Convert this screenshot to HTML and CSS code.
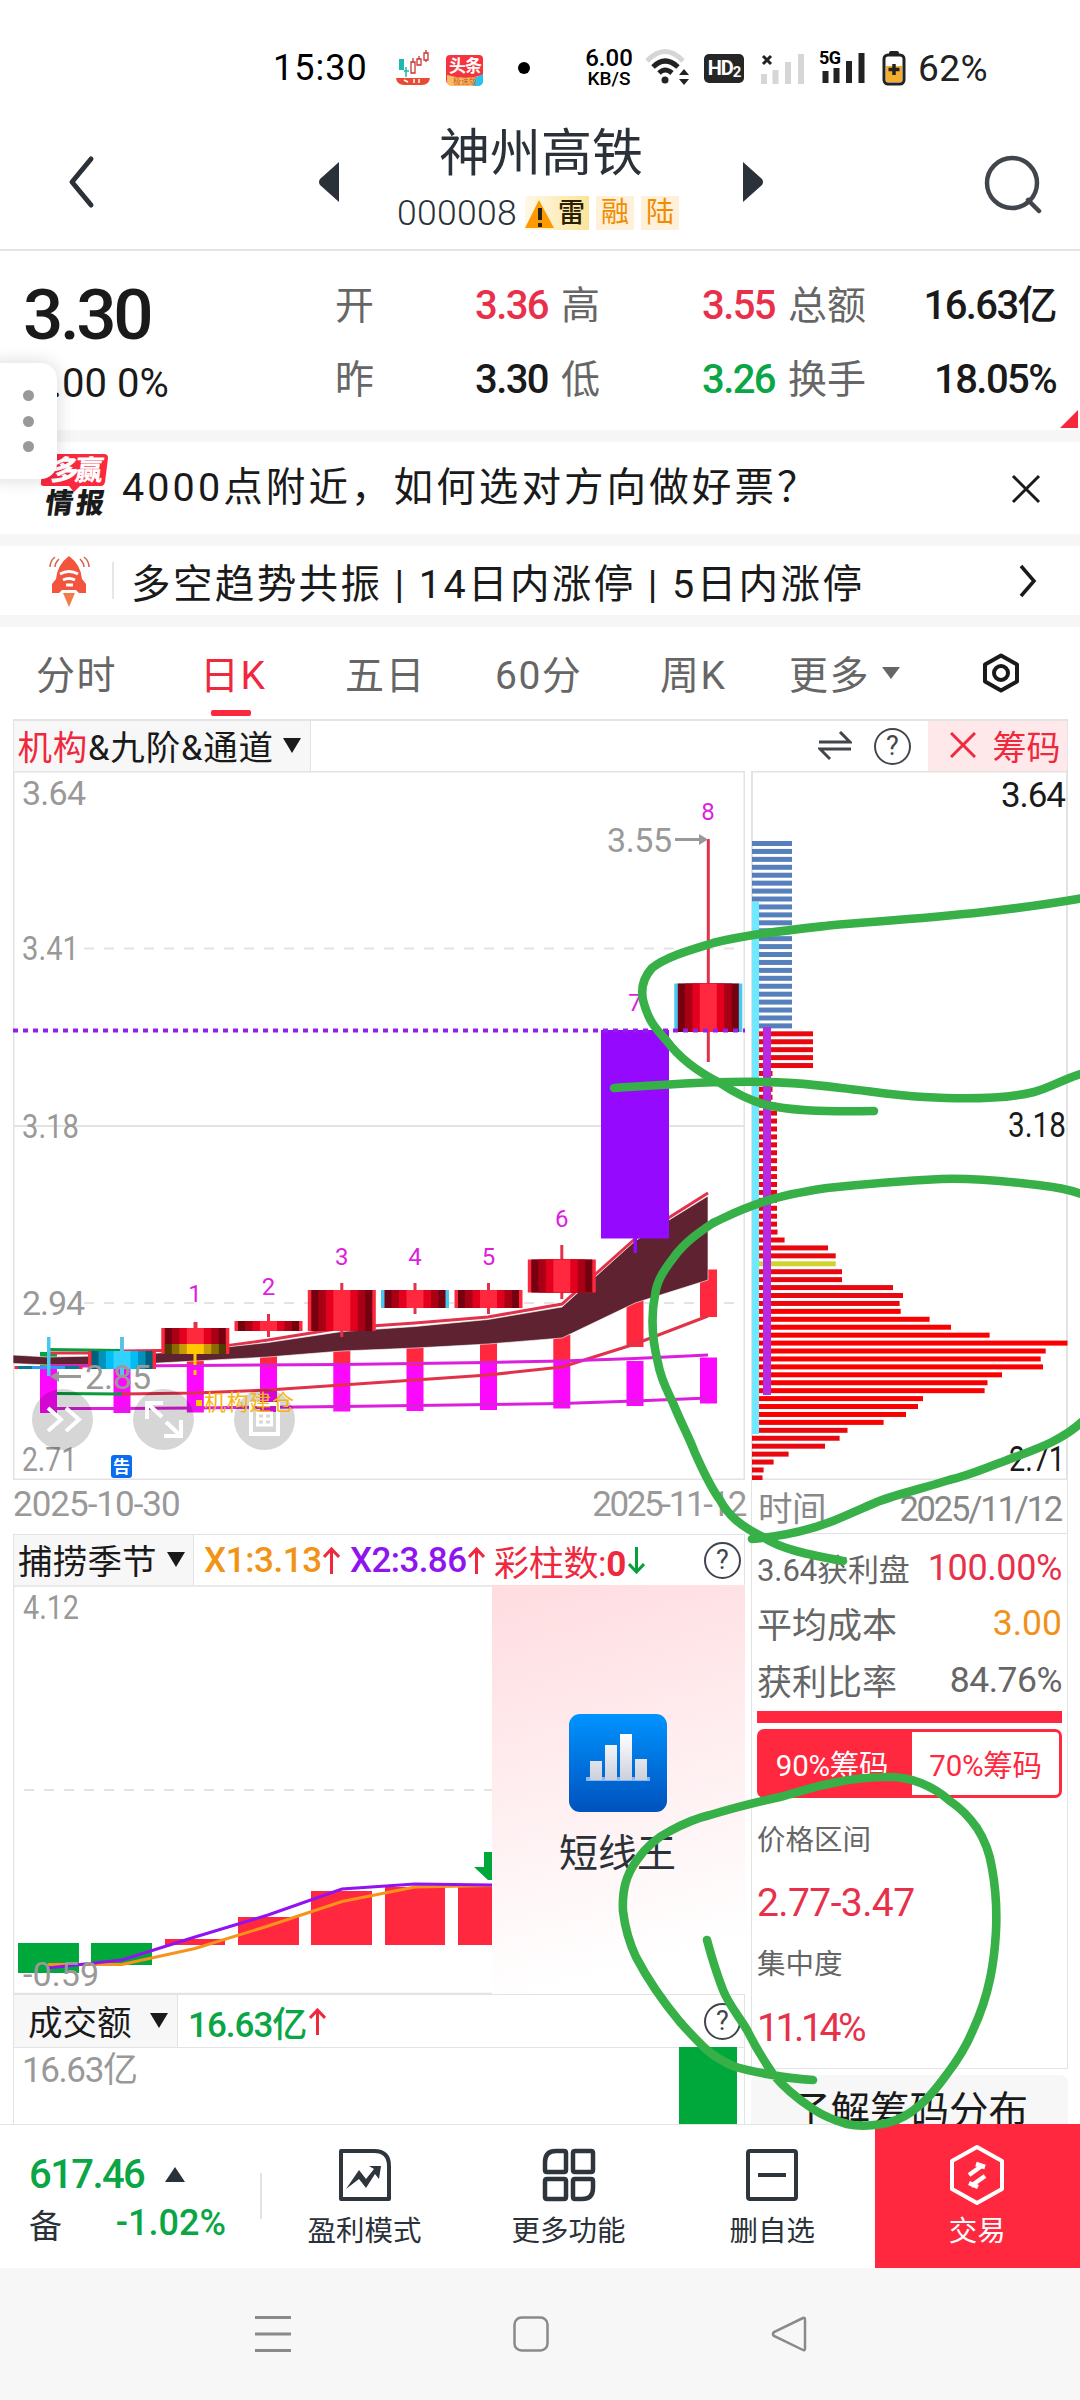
FILE: index.html
```html
<!DOCTYPE html>
<html lang="zh-CN">
<head>
    <meta charset="UTF-8">
    <meta name="viewport" content="width=device-width, initial-scale=1.0">
    <title>神州高铁 000008</title>
    <link rel="stylesheet" href="styles.css">
</head>
<body>

<div class="phone">

    <!-- 状态栏 -->
    <div class="status-bar">
        <span class="clock">15:30</span>
        <svg class="st-app1" width="36" height="36" viewBox="0 0 36 36">
            <path d="M3 9h5v11h-5z" fill="#1fb8ae"/>
            <path d="M10 17v10M8 21h5" stroke="#1fb8ae" stroke-width="1.5"/>
            <path d="M15 12h4v11h-4zM21 9h4v6h-4zM28 3h4v7h-4zM17 8v4M23 6v3M30 0v3M30 10v2" fill="none" stroke="#c33" stroke-width="1.3"/>
            <path d="M0 28h34q-1 7-8 7H8q-7 0-8-7z" fill="#e94a35"/>
            <path d="M8 30l4 2M18 29v4M23 29v4" stroke="#fff" stroke-width="1.5"/>
        </svg>
        <svg class="st-app2" width="38" height="34" viewBox="0 0 38 34">
            <rect x="0" y="1" width="37" height="29" rx="4" fill="#f5343f"/>
            <path d="M1 21q18 5 36 0v7q-1 4-5 4H6q-5 0-5-5z" fill="#f9bd68"/>
            <path d="M29 24l8-4v8q-1 4-6 4h-4z" fill="#22c5ee"/>
            <text x="3" y="18" class="toutiao">头条</text>
            <text x="7" y="30" class="toutiao-sub">极速版</text>
        </svg>
        <i class="st-dot"></i>
        <span class="net-speed"><b>6.00</b><small>KB/S</small></span>
        <svg class="st-wifi" width="46" height="36" viewBox="0 0 46 36" fill="none" stroke-width="5">
            <path d="M2 12Q20-7 38 12" stroke="#d6d6d6"/>
            <path d="M8 18Q20 6 33 18M14 24Q20 18 27 24" stroke="#222"/>
            <circle cx="20" cy="31" r="3.5" fill="#222"/>
            <path d="M39 20l5 6h-10zM39 36l5-6h-10z" fill="#222"/>
        </svg>
        <span class="hd">HD<sub>2</sub></span>
        <svg class="st-sig" width="44" height="32" viewBox="0 0 44 32">
            <path d="M2 4l8 8M10 4l-8 8" stroke="#222" stroke-width="3"/>
            <path d="M3 32V22M14.500 32V18M27 32V10M40 32V2" stroke="#d6d6d6" stroke-width="6"/>
        </svg>
        <svg class="st-sig5" width="47" height="40" viewBox="0 -6 47 40">
            <text x="0" y="14" class="five-g" textLength="22">5G</text>
            <path d="M6.500 33V21M17.500 33V18M30 33V11M42.500 33V3" stroke="#222" stroke-width="6"/>
        </svg>
        <svg class="st-bat" width="24" height="36" viewBox="0 0 24 36">
            <rect x="7" y="1" width="10" height="5" rx="2" fill="#222"/>
            <rect x="2" y="5" width="20" height="29" rx="4" fill="#fff" stroke="#222" stroke-width="3"/>
            <rect x="4" y="16" width="16" height="16" fill="#f4ae2f"/>
            <path d="M12 14v11M6.500 19.500h11" stroke="#222" stroke-width="3.500"/>
        </svg>
        <span class="battery">62%</span>
    </div>

    <!-- 标题栏 -->
    <header class="title-bar">
        <svg class="ico-back" width="30" height="54" viewBox="0 0 30 54"><path d="M25 4L6 27l19 23" fill="none" stroke="#2b3138" stroke-width="5" stroke-linecap="round" stroke-linejoin="round"/></svg>
        <svg class="ico-prev" width="20" height="40" viewBox="0 0 20 40"><path d="M20 0v40L1 23q-2-3 0-6z" fill="#2b3138"/></svg>
        <div class="title">
            <h1>神州高铁</h1>
            <div class="code-line">
                <span class="code">000008</span>
                <span class="tag tag-warn"><svg width="29" height="32" viewBox="0 0 29 32"><path d="M14 3l15 28H0z" fill="#f90"/><path d="M15 11v12M15 26v4" stroke="#222" stroke-width="4"/></svg>雷</span>
                <span class="tag">融</span>
                <span class="tag tag-last">陆</span>
            </div>
        </div>
        <svg class="ico-next" width="20" height="40" viewBox="0 0 20 40"><path d="M0 0v40l19-17q2-3 0-6z" fill="#2b3138"/></svg>
        <svg class="ico-search" width="58" height="60" viewBox="0 0 58 60" fill="none" stroke="#41464d" stroke-width="4.500"><circle cx="28" cy="29" r="25"/><path d="M44 46l11 11" stroke-linecap="round"/></svg>
    </header>

    <!-- 行情 -->
    <section class="quote">
        <div class="price">
            <div class="last">3.30</div>
            <div class="change">0.00 0%</div>
        </div>
        <div class="cell"><label>开</label><b class="up">3.36</b></div>
        <div class="cell"><label>高</label><b class="up">3.55</b></div>
        <div class="cell"><label>总额</label><b>16.63亿</b></div>
        <div class="cell"><label>昨</label><b>3.30</b></div>
        <div class="cell"><label>低</label><b class="down">3.26</b></div>
        <div class="cell"><label>换手</label><b>18.05%</b></div>
        <svg class="corner" width="18" height="18" viewBox="0 0 18 18"><path d="M18 0v18H0z" fill="#f5283c"/></svg>
    </section>

    <div class="notice notice-news">
        <svg class="news-logo" width="68" height="64" viewBox="40 453 68 64">
            <path d="M47 454h57q4 0 4 4l-3 24q-1 4-4 4H80l-6 6-5-6H44q-4 0-3-4l2-24q0-4 4-4z" fill="#fb283e"/>
            <g transform="translate(0 480) skewX(-8)"><text x="50" y="0" class="logo-top" textLength="52">多赢</text></g>
            <g transform="translate(0 513) skewX(-8)"><text x="44" y="0" class="logo-bottom" textLength="59">情报</text></g>
        </svg>
        <span class="news-text">4000点附近，如何选对方向做好票？</span>
        <svg class="ico-close" width="30" height="30" viewBox="0 0 30 30"><path d="M2 2l26 26M28 2L2 28" stroke="#1a1a1a" stroke-width="3"/></svg>
    </div>
    <div class="notice notice-trend">
        <svg class="rocket" width="42" height="52" viewBox="48 554 42 52">
            <path d="M69 555q12 9 13 23l4 5v9h-7l-3-3H62l-3 3h-7v-9l4-5q1-14 13-23z" fill="#f2543d"/>
            <path d="M63 592h12l-6 14z" fill="#f47a4a"/>
            <path d="M60 573q9-5 18 0M63 579q6-3 12 0M66 584h7" stroke="#fff" stroke-width="3" fill="none"/>
            <path d="M50 566q0-6 5-10M55 566q0-4 4-8M89 566q0-6-5-10M84 566q0-4-4-8" stroke="#d8604c" stroke-width="1.500" fill="none"/>
        </svg>
        <i class="bar"></i>
        <span class="trend-text">多空趋势共振 | 14日内涨停 | 5日内涨停</span>
        <svg class="ico-more" width="18" height="34" viewBox="0 0 18 34"><path d="M2 2l13 15L2 32" fill="none" stroke="#1a1a1a" stroke-width="3.500"/></svg>
    </div>

    <!-- 周期 -->
    <nav class="tabs">
        <span class="t1">分时</span>
        <span class="t2 on">日K</span>
        <span class="t3">五日</span>
        <span class="t4">60分</span>
        <span class="t5">周K</span>
        <span class="t6">更多</span>
        <svg class="caret" width="18" height="12" viewBox="0 0 18 12"><path d="M0 0h18l-9 12z" fill="#666"/></svg>
        <svg class="ico-set" width="40" height="40" viewBox="0 0 40 40" fill="none" stroke="#1a1a1a" stroke-width="4"><path d="M20 2.500l16 9v17l-16 9-16-9v-17z" stroke-linejoin="round"/><circle cx="20" cy="20" r="7"/></svg>
    </nav>

    <div class="k-toolbar">
        <span class="select select-k"><em>机构</em>&amp;九阶&amp;通道<i class="tri"></i></span>
        <svg class="ico-swap" width="34" height="30" viewBox="0 0 34 30" fill="none" stroke="#41464d" stroke-width="3"><path d="M1 11h31L22 1M33 18H2l10 10"/></svg>
        <span class="help">?</span>
        <span class="chip-btn"><svg width="26" height="26" viewBox="0 0 26 26"><path d="M1 1l24 24M25 1L1 25" stroke="#f02a40" stroke-width="3"/></svg>筹码</span>
    </div>

    <div class="board">
        <div class="left">
            <!-- K线 -->
            <svg class="k-chart" width="732" height="709" viewBox="13 771 732 709">
                <g fill="none" stroke="#e3e3e3" stroke-width="2">
                    <path d="M13.500 771.500h731v708H13.500z"/>
                    <path d="M14 1126h730"/>
                    <path d="M84 948.500h650M84 1303h650" stroke-dasharray="10 10"/>
                </g>
                <g id="volume-bars"></g>
                <g fill="none" stroke="#e2324a" stroke-width="3">
                    <path d="M48 1353h45M122 1351l73-1 73-10 74-12 73-5 73-6 74-13 73-65 73-46"/>
                    <path d="M122 1394l73-1 73-3 74-5 73-5 73-5 74-8 73-23 73-28"/>
                    <path d="M48 1349.500l74 1M57 1393.500l65 .5" stroke="#0a9c3c"/>
                </g>
                <path class="ribbon" d="M13 1355l35 2 74-1.500 73-5 73-8 74-11 73-5 73-7 74-12.500 73-66 73-45v84l-73 23-73 35-74 6-73 4-73 3-74 6-73 4-73 4h-74l-35-1.500z"/>
                <path d="M48 1366h74l73-.5 146-1 147-2 74-1.500 73-2.500 73-3.500M48 1408.500h74l73-.5 146-1.500 147-2 74-1 73-2.500 73-3" fill="none" stroke="#dd1edd" stroke-width="3"/>
                <g id="candles"></g>
                <path d="M13 1030.600h732" stroke="#9420e8" stroke-width="4" stroke-dasharray="5 5"/>
                <g class="axis-text">
                    <text x="22" y="805" textLength="64">3.64</text>
                    <text x="22" y="960" textLength="57" lengthAdjust="spacingAndGlyphs">3.41</text>
                    <text x="22" y="1138" textLength="57" lengthAdjust="spacingAndGlyphs">3.18</text>
                    <text x="22" y="1315" textLength="63">2.94</text>
                    <text x="22" y="1471" textLength="55" lengthAdjust="spacingAndGlyphs">2.71</text>
                    <text x="607" y="852" textLength="65">3.55</text>
                    <text x="85" y="1389" textLength="66">2.85</text>
                </g>
                <g stroke="#999" stroke-width="3"><path d="M675 839.500h26M56 1376.500h25"/></g>
                <path d="M699 834l9 5.500-9 5.500zM59 1371l-9 5.500 9 5.500z" fill="#999"/>
                <g class="nine" id="nine"></g>
                <g fill="#000" fill-opacity=".16">
                    <circle cx="62.500" cy="1419.500" r="30.500"/>
                    <circle cx="163.500" cy="1419.500" r="30.500"/>
                    <circle cx="264.500" cy="1419.500" r="30.500"/>
                </g>
                <g fill="none" stroke="#fff" stroke-width="4">
                    <path d="M48 1408l13 11.500-13 11.500M66 1408l13 11.500-13 11.500"/>
                    <path d="M147 1419v-16h16M147 1403l15 14M181 1420v16h-17M181 1436l-15-14"/>
                    <path d="M251 1404h27v30h-27z"/><path d="M257.500 1413h14v12h-14zM264.500 1413v12M257.500 1419h14" stroke-width="3"/>
                </g>
                <rect x="196" y="1400" width="6" height="6" fill="#ffc800"/>
                <text x="204" y="1410" class="build" textLength="90">机构建仓</text>
                <rect x="111" y="1455" width="21" height="23" rx="3" fill="#0a6cf0"/>
                <text x="113" y="1473" class="gao">告</text>
            </svg>
            <div class="dates"><span>2025-10-30</span><span class="to">2025-11-12</span></div>

            <div class="sub-toolbar">
                <span class="select select-season">捕捞季节<i class="tri"></i></span>
                <span class="val v-x1">X1:3.13</span><svg class="arr" width="17" height="27" viewBox="0 0 17 27"><path d="M8.500 27V2M1 10l7.500-8 7.500 8" fill="none" stroke="#f0283e" stroke-width="3"/></svg>
                <span class="val v-x2">X2:3.86</span><svg class="arr" width="17" height="27" viewBox="0 0 17 27"><path d="M8.500 27V2M1 10l7.500-8 7.500 8" fill="none" stroke="#f0283e" stroke-width="3"/></svg>
                <span class="val v-n">彩柱数:<b>0</b></span><svg class="arr" width="17" height="27" viewBox="0 0 17 27"><path d="M8.500 0v25M1 17l7.500 8 7.500-8" fill="none" stroke="#07a03a" stroke-width="3"/></svg>
                <span class="help">?</span>
            </div>
            <div class="season">
                <svg width="479" height="409" viewBox="13 1585 479 409">
                    <path d="M492 1586H13.500v407.500H492" fill="none" stroke="#e3e3e3" stroke-width="1.500"/>
                    <path d="M24 1790h468" stroke="#e3e3e3" stroke-width="2" stroke-dasharray="10 10"/>
                    <path d="M18 1943h61v30H18zM91 1943h61v22H91z" fill="#00a83c"/>
                    <path d="M165 1939h60v6h-60zM238 1917h61v28h-61zM311 1891h61v54h-61zM385 1887h60v58h-60zM458 1887h34v58h-34z" fill="#ff283e"/>
                    <path d="M48 1964.500h74l73-16 73-22.500 74-24.500 73-14.500 77-1.500" fill="none" stroke="#f7931a" stroke-width="3"/>
                    <path d="M48 1968l74-8 73-23 73-22 74-26 73-5 77 1" fill="none" stroke="#9212f0" stroke-width="3"/>
                    <path d="M484 1852h8v28h-4l-14-13h10z" fill="#00a83c"/>
                    <text class="axis-text" x="23" y="1619" textLength="56" lengthAdjust="spacingAndGlyphs">4.12</text>
                    <text class="axis-text" x="23" y="1986" textLength="76">-0.59</text>
                </svg>
                <div class="promo">
                    <svg width="98" height="98" viewBox="0 0 98 98">
                        <defs>
                            <linearGradient id="blue" x2="0" y2="1"><stop stop-color="#0093ff"/><stop offset="1" stop-color="#0052bd"/></linearGradient>
                            <linearGradient id="silver" x2="0" y2="1"><stop stop-color="#fff"/><stop offset="1" stop-color="#ccd0dc"/></linearGradient>
                        </defs>
                        <rect width="98" height="98" rx="11" fill="url(#blue)"/>
                        <path d="M17 65h64" stroke="#8bb8f2" stroke-width="4"/>
                        <path d="M21 47h12v19H21zM36 31h12v35H36zM51 20h12v46H51zM66 45h12v21H66z" fill="url(#silver)"/>
                    </svg>
                    <span>短线王</span>
                </div>
            </div>

            <div class="sub-toolbar sub-toolbar-vol">
                <span class="select select-vol">成交额<i class="tri"></i></span>
                <span class="val v-vol">16.63亿</span><svg class="arr" width="17" height="27" viewBox="0 0 17 27"><path d="M8.500 27V2M1 10l7.500-8 7.500 8" fill="none" stroke="#f0283e" stroke-width="3"/></svg>
                <span class="help">?</span>
            </div>
            <div class="turnover"><span>16.63亿</span><i></i></div>
        </div>

        <!-- 筹码分布 -->
        <div class="right">
            <svg width="317" height="709" viewBox="751 771 317 709">
                <path d="M752 771.500h315v708H752z" fill="none" stroke="#e3e3e3" stroke-width="2"/>
                <g id="chips"></g>
                <path d="M755.500 902v532" stroke="#70e8ff" stroke-width="7"/>
                <path d="M767 1027v368" stroke="#b52ae2" stroke-width="8"/>
                <g class="axis-dark">
                    <text x="1001" y="807" textLength="65">3.64</text>
                    <text x="1008" y="1137" textLength="58" lengthAdjust="spacingAndGlyphs">3.18</text>
                    <text x="1009" y="1471" textLength="56" lengthAdjust="spacingAndGlyphs">2.71</text>
                </g>
            </svg>
            <div class="chip-date"><span>时间</span><span class="to">2025/11/12</span></div>
            <div class="chip-info">
                <div class="row"><label class="small">3.64获利盘</label><span class="up">100.00%</span></div>
                <div class="row"><label>平均成本</label><span class="avg">3.00</span></div>
                <div class="row"><label>获利比率</label><span>84.76%</span></div>
                <div class="ratio"></div>
                <div class="switch"><span class="on">90%筹码</span><span>70%筹码</span></div>
                <div class="cap">价格区间</div>
                <div class="num">2.77-3.47</div>
                <div class="cap">集中度</div>
                <div class="num num-last">11.14%</div>
            </div>
            <div class="learn">了解筹码分布</div>
        </div>
    </div>

    <!-- 底部 -->
    <footer class="bottom">
        <div class="index">
            <div><b>617.46</b><svg width="20" height="15" viewBox="0 0 20 15"><path d="M10 0l10 15H0z" fill="#2b3138"/></svg></div>
            <div><span>备</span><b class="pct">-1.02%</b></div>
        </div>
        <i class="split"></i>
        <div class="item item-first">
            <svg width="54" height="54" viewBox="0 0 54 54" fill="none" stroke="#2f353d" stroke-width="4"><path d="M3 3h33q15 0 15 15v33H3z" stroke-linejoin="round"/><path d="M8 41l13-19 7 9 8-10-5-3h12l-2 13-4-5-9 14-7-9z" fill="#2f353d" stroke="none"/></svg>
            <span>盈利模式</span>
        </div>
        <div class="item">
            <svg width="54" height="54" viewBox="0 0 54 54" fill="none" stroke="#2f353d" stroke-width="4.500" stroke-linejoin="round"><path d="M14 3h8q2 0 2 2v17q0 2-2 2H5q-2 0-2-2v-8Q3 3 14 3zM33 3h16q2 0 2 2v17q0 2-2 2H33q-2 0-2-2V5q0-2 2-2zM5 31h17q2 0 2 2v16q0 2-2 2H5q-2 0-2-2V33q0-2 2-2zM33 31h16q2 0 2 2v7q0 11-11 11h-7q-2 0-2-2V33q0-2 2-2z"/></svg>
            <span>更多功能</span>
        </div>
        <div class="item">
            <svg width="54" height="54" viewBox="0 0 54 54" fill="none" stroke="#2f353d" stroke-width="4"><rect x="3" y="3" width="48" height="48" rx="2"/><path d="M13 27h28"/></svg>
            <span>删自选</span>
        </div>
        <div class="item item-trade">
            <svg width="56" height="62" viewBox="0 0 56 62" fill="none" stroke="#fff" stroke-width="4"><path d="M28 3l25 14v28L28 59 3 45V17z" stroke-linejoin="round"/><path d="M20 31l14-10M27 20l9 3M36 32l-14 10M20 39l9 4" stroke-width="4.500"/></svg>
            <span>交易</span>
        </div>
    </footer>

    <div class="sys-nav">
        <svg width="36" height="36" viewBox="0 0 36 36" stroke="#8a8a8a" stroke-width="3"><path d="M0 1.500h36M0 18h36M0 34.500h36"/></svg>
        <svg width="36" height="36" viewBox="0 0 36 36" fill="none" stroke="#8a8a8a" stroke-width="2.500"><rect x="1.500" y="1.500" width="33" height="33" rx="7"/></svg>
        <svg width="36" height="36" viewBox="0 0 36 36" fill="none" stroke="#8a8a8a" stroke-width="2.500"><path d="M32 2q2-1 2 2v28q0 3-2 2L3 20q-2-2 0-4z"/></svg>
    </div>

    <!-- 悬浮侧栏 -->
    <div class="handle"><i></i><i></i><i></i></div>

    <!-- 手绘标注 -->
    <svg class="marks" width="1080" height="2400" viewBox="0 0 1080 2400">
        <path d="M1084 898C1050 904 1020 908 984 912C920 919 880 921 834 925C790 930 750 934 713 943C690 950 665 957 652 968C643 978 641 990 643 1000C648 1020 655 1028 666 1040C680 1059 700 1073 720 1083C735 1093 755 1104 777 1107C800 1111 830 1112 874 1111"/>
        <path d="M614 1088C650 1086 690 1082 730 1082C780 1081 810 1084 841 1088C870 1091 890 1095 924 1097C960 1099 1005 1099 1034 1092C1050 1088 1065 1078 1084 1073"/>
        <path d="M1084 1195C1070 1189 1055 1187 1038 1185C1005 1181 970 1178 941 1179C900 1181 865 1184 827 1188C800 1192 780 1196 763 1202C740 1209 728 1216 713 1223C698 1233 684 1243 674 1257C664 1270 657 1280 655 1295C651 1315 651 1335 658 1363C661 1380 667 1390 673 1403C682 1425 688 1435 695 1453C702 1468 709 1485 720 1500C728 1515 740 1526 763 1537C780 1549 810 1555 843 1561"/>
        <path d="M752 1539C785 1536 810 1530 833 1521C850 1514 863 1508 877 1502C900 1493 925 1488 949 1480C970 1475 985 1468 1002 1462C1030 1451 1060 1443 1084 1420"/>
        <path d="M813 2080C795 2079 782 2077 767 2074C755 2072 745 2070 733 2066C722 2061 715 2057 707 2050C697 2041 690 2033 680 2022C660 1998 648 1980 636 1957C628 1940 625 1928 623 1911C622 1890 626 1875 637 1860C646 1847 656 1838 670 1831C683 1824 697 1818 710 1815C733 1808 757 1802 780 1797C800 1792 815 1786 833 1783C850 1779 870 1777 890 1777C910 1777 932 1785 950 1801C962 1809 970 1818 977 1828C986 1842 990 1855 992 1868C996 1890 997 1910 996 1931C995 1950 993 1965 990 1979C986 1998 980 2015 973 2030C966 2047 957 2061 947 2074C939 2085 930 2097 920 2105C910 2114 900 2120 887 2123C872 2126 860 2127 847 2124C833 2120 822 2115 813 2109C798 2099 785 2089 773 2074C762 2058 754 2044 747 2030C738 2015 729 2005 723 1990C716 1972 711 1955 707 1940"/>
    </svg>
</div>

<script src="script.js"></script>
</body>
</html>
```
FILE: styles.css
```css
* {
    box-sizing: border-box;
}

body {
    margin: 0;
    background: #fff;
    color: #1a1a1a;
    font-family: Roboto, "Noto Sans CJK SC", sans-serif;
}

svg {
    display: block;
    flex: none;
}

i, em {
    font-style: normal;
}

.phone {
    position: relative;
    width: 1080px;
    height: 2400px;
    overflow: hidden;
    display: flex;
    flex-direction: column;
}

.phone > * {
    flex: none;
}

.up { color: #e8304a; }
.down { color: #0aa545; }

/* 状态栏 */
.status-bar {
    height: 136px;
    display: flex;
    align-items: center;
    padding-left: 273px;
    color: #000;
    white-space: nowrap;
}

.clock {
    width: 123px;
    font-size: 36px;
    letter-spacing: 1px;
}

.st-app2 { margin-left: 14px; margin-top: 5px; }

.toutiao {
    font-size: 17px;
    font-weight: 700;
    fill: #fff;
    letter-spacing: -1px;
}

.toutiao-sub {
    font-size: 8px;
    fill: #d05a20;
}

.st-dot {
    width: 12px;
    height: 12px;
    margin-left: 34px;
    border-radius: 50%;
    background: #000;
}

.net-speed {
    width: 50px;
    margin-left: 54px;
    text-align: center;
}

.net-speed b {
    display: block;
    font-size: 24px;
    font-weight: 500;
    line-height: 21px;
}

.net-speed small {
    display: block;
    font-size: 19px;
    font-weight: 500;
    line-height: 20px;
}

.st-wifi { margin-left: 11px; margin-top: -2px; }

.hd {
    width: 40px;
    height: 29px;
    margin-left: 13px;
    border-radius: 5px;
    background: #262626;
    color: #fff;
    font-size: 20px;
    font-weight: 700;
    line-height: 29px;
    text-align: center;
    letter-spacing: -1px;
}

.hd sub {
    font-size: 15px;
    line-height: 0;
    vertical-align: -2px;
}

.st-sig { margin-left: 17px; }
.st-sig5 { margin-left: 14px; margin-top: -8px; }

.five-g {
    font-size: 18px;
    font-weight: 700;
}

.st-bat { margin-left: 16px; }

.battery {
    margin-left: 12px;
    font-size: 37px;
    letter-spacing: 0.4px;
    color: #222;
}

/* 标题栏 */
.title-bar {
    height: 115px;
    display: flex;
    border-bottom: 2px solid #e4e4e4;
}

.ico-back { margin: 19px 0 0 66px; }
.ico-prev { margin: 26px 0 0 223px; }

.title {
    width: 404px;
    padding-left: 58px;
    white-space: nowrap;
}

.title h1 {
    margin: -12px 0 0 42px;
    font-size: 51px;
    line-height: 60px;
    font-weight: 400;
    color: #2b3138;
}

.code-line {
    display: flex;
    align-items: center;
    height: 34px;
    margin-top: 12px;
}

.code {
    width: 128px;
    font-size: 35.5px;
    font-weight: 300;
    letter-spacing: 0.3px;
    color: #2b3138;
}

.tag {
    width: 38px;
    height: 34px;
    margin-right: 7px;
    background: #fff0da;
    color: #f08c00;
    font-size: 28px;
    line-height: 34px;
    text-align: center;
}

.tag-warn {
    display: flex;
    align-items: center;
    width: 64px;
    background: linear-gradient(90deg, #fff8e8, #fbe49a);
    color: #2a2000;
    font-weight: 500;
    font-size: 27px;
}

.tag-warn svg { margin-right: 4px; }

.ico-next { margin-top: 26px; }
.ico-search { margin: 18px 0 0 221px; }

/* 行情 */
.quote {
    position: relative;
    height: 191px;
    display: grid;
    grid-template-columns: 322px 213px 214px 268px;
    grid-template-rows: 74px 74px;
    column-gap: 13px;
    padding-top: 18px;
    border-bottom: 12px solid #f6f6f6;
}

.price { grid-row: 1 / 3; }

.last {
    height: 92px;
    padding: 3px 0 0 23px;
    font-size: 71px;
    line-height: 86px;
    letter-spacing: -3.4px;
    font-weight: 500;
}

.change {
    padding: 0 0 0 29px;
    font-size: 40px;
    line-height: 46px;
}

.cell {
    display: flex;
    justify-content: space-between;
    align-items: center;
    white-space: nowrap;
    font-size: 40px;
    line-height: 46px;
}

.cell b {
    font-weight: 500;
    letter-spacing: -1.6px;
}

.cell label {
    font-size: 39px;
    color: #666;
}

.corner {
    position: absolute;
    left: 1060px;
    top: 159px;
}

/* 公告 */
.notice {
    display: flex;
    align-items: center;
    white-space: nowrap;
    border-bottom: 12px solid #f6f6f6;
    font-size: 39.5px;
}

.notice-news { height: 104px; }
.notice-trend { height: 81px; }

.news-logo {
    margin-left: 40px;
    margin-top: -6px;
    overflow: visible;
}

.logo-top {
    font-size: 28px;
    font-weight: 900;
    fill: #fff;
}

.logo-bottom {
    font-size: 28px;
    font-weight: 900;
    fill: #1a1a1a;
}

.news-text {
    width: 889px;
    margin-left: 14px;
    line-height: 88px;
    letter-spacing: 3.1px;
}

.ico-close { margin-top: 2px; }

.rocket { margin-left: 48px; }

.bar {
    width: 2px;
    height: 37px;
    margin-left: 22px;
    background: #e6e6e6;
}

.trend-text {
    width: 888px;
    margin-left: 17px;
    letter-spacing: 2.4px;
}

/* 周期 */
.tabs {
    height: 92px;
    display: flex;
    align-items: center;
    padding-left: 36px;
    font-size: 39px;
    line-height: 99px;
    letter-spacing: 1.5px;
    color: #666;
    white-space: nowrap;
}

.tabs span { height: 92px; }

.t1 { width: 164px; }
.t2 { width: 145px; }
.t3 { width: 150px; }
.t4 { width: 165px; }
.t5 { width: 129px; }
.t6 { width: 93px; }

.tabs .on {
    color: #f0283e;
    position: relative;
}

.tabs .on::after {
    content: "";
    position: absolute;
    left: 11px;
    bottom: 3px;
    width: 40px;
    height: 6px;
    border-radius: 2px;
    background: #fb283e;
}

.ico-set { margin-left: 81px; }

.k-toolbar {
    height: 52px;
    display: flex;
    align-items: center;
    width: 1055px;
    margin-left: 12.5px;
    border: solid #e3e3e3;
    border-width: 2px 1px 0;
    white-space: nowrap;
}

.select {
    display: flex;
    align-items: center;
    height: 100%;
    padding: 0 0 2px 4px;
    background: #f7f7f7;
    border-right: 1.5px solid #e3e3e3;
    font-size: 34.5px;
}

.select em { color: #f0283e; }
.select-k { width: 298px; letter-spacing: 0.8px; }
.select-season { width: 180px; letter-spacing: 0.2px; }
.select-vol { width: 164px; padding-left: 14px; }

.tri {
    margin-left: 8px;
    border: solid transparent;
    border-width: 15px 9.5px 0;
    border-top-color: #1a1a1a;
}

.select-k .tri { margin-left: 9px; }
.select-season .tri { margin-left: 10px; }
.select-vol .tri { margin-left: 18px; }

.ico-swap { margin-left: 507px; }

.help {
    width: 37px;
    height: 37px;
    border: 2.5px solid #41464d;
    border-radius: 50%;
    color: #41464d;
    font-size: 27px;
    line-height: 32px;
    text-align: center;
}

.k-toolbar .help { margin-left: 22px; }

.chip-btn {
    display: flex;
    align-items: center;
    justify-content: space-between;
    width: 139px;
    height: 50px;
    margin-left: 17px;
    padding: 0 6px 2px 22px;
    background: #ffe8ea;
    color: #f0283e;
    font-size: 34px;
}

/* 图表区 */
.board {
    display: flex;
    gap: 6px;
    height: 1353px;
    margin-left: 13px;
    overflow: hidden;
}

.left { width: 732px; }
.right { width: 317px; }

.axis-text {
    font-size: 34px;
    fill: #999;
}

.axis-dark {
    font-size: 35px;
    fill: #1a1a1a;
}

.ribbon {
    fill: #5e2231;
    stroke: #fff;
    stroke-width: 0.6;
}

.nine {
    font-size: 24px;
    fill: #dd1edd;
    text-anchor: middle;
}

.build {
    font-size: 22px;
    fill: #f5b70a;
}

.gao {
    font-size: 17px;
    font-weight: 700;
    fill: #fff;
}

.dates {
    display: flex;
    justify-content: space-between;
    height: 54px;
    font-size: 35px;
    line-height: 50px;
    letter-spacing: -1px;
    color: #999;
}

.dates .to { letter-spacing: -2.4px; }

.sub-toolbar {
    display: flex;
    align-items: center;
    height: 51px;
    border: 1.5px solid #e3e3e3;
    border-bottom: 0;
    white-space: nowrap;
}

.sub-toolbar-vol { height: 53px; }

.val {
    font-size: 35px;
    font-weight: 500;
}

.arr { margin-left: 2px; }
.v-x1 { width: 117px; margin-left: 10px; color: #f09316; letter-spacing: -0.4px; }
.v-x2 { width: 116px; margin-left: 10px; color: #8f14ee; letter-spacing: -0.6px; }
.v-n { margin-left: 9px; color: #f0283e; font-weight: 400; letter-spacing: -0.3px; }
.v-vol { width: 116px; margin-left: 10px; color: #0aa545; letter-spacing: -1px; }
.v-vol + .arr { margin-left: 5px; }

.sub-toolbar .help {
    margin-left: auto;
    margin-right: 3px;
}

.season { display: flex; }

.promo {
    width: 253px;
    height: 409px;
    padding-top: 129px;
    display: flex;
    flex-direction: column;
    align-items: center;
    background: linear-gradient(165deg, #ffdce0, #fff 88%);
    font-size: 39px;
    line-height: 84px;
    color: #2b3138;
}

.promo svg { margin-left: -2px; }
.promo span { margin-left: -2px; }

.turnover {
    display: flex;
    justify-content: space-between;
    height: 78px;
    border: 1.5px solid #e3e3e3;
    border-bottom: 0;
    padding: 0 7px 0 8px;
    font-size: 35px;
    line-height: 45px;
    letter-spacing: -1.4px;
    color: #999;
}

.turnover i {
    width: 58px;
    margin-top: -1px;
    background: #00a83c;
}

/* 筹码 */
.chip-date {
    display: flex;
    justify-content: space-between;
    height: 53px;
    padding: 0 6px 0 6px;
    border: solid #e3e3e3;
    border-width: 0 1.5px;
    font-size: 34.5px;
    line-height: 58px;
    letter-spacing: -0.6px;
    color: #888;
}

.chip-date .to { letter-spacing: -2.2px; }

.chip-info {
    height: 536px;
    padding: 6px 5px 0;
    border: 1.5px solid #e3e3e3;
    color: #666;
}

.row {
    display: flex;
    justify-content: space-between;
    align-items: center;
    height: 54px;
    font-size: 35px;
    white-space: nowrap;
}

.row span { font-size: 35.5px; letter-spacing: -0.5px; }
.row span.up { font-size: 36px; letter-spacing: -0.4px; padding-top: 2px; }
.row span.avg { color: #f0921a; letter-spacing: 0; }
.row .small { font-size: 31px; letter-spacing: -0.1px; }
.row + .row { height: 57px; }

.ratio {
    height: 12px;
    margin-top: 3px;
    background: #ff283e;
}

.switch {
    display: flex;
    height: 69px;
    margin-top: 6px;
    border: 3px solid #ff283e;
    border-radius: 7px;
    color: #ff283e;
    font-size: 29.5px;
    line-height: 69px;
    text-align: center;
    letter-spacing: -0.3px;
}

.switch span { flex: 1; }

.switch .on {
    flex: 0 0 152px;
    padding-right: 8px;
    background: #ff283e;
    color: #fff;
}

.cap {
    height: 55px;
    padding-top: 6px;
    font-size: 28.5px;
    line-height: 50px;
}

.switch + .cap {
    height: 75px;
    padding-top: 18px;
}

.num {
    height: 61px;
    font-size: 39px;
    line-height: 61px;
    letter-spacing: -0.6px;
    color: #e8304a;
}

.num-last {
    padding-top: 9px;
    letter-spacing: -3.4px;
}

.learn {
    height: 60px;
    margin-top: 6px;
    border-radius: 8px;
    background: #f7f7f7;
    font-size: 39.5px;
    line-height: 74px;
    text-align: center;
}

/* 底部 */
.bottom {
    display: flex;
    height: 144px;
    border-top: 1.5px solid #e3e3e3;
    background: #fff;
}

.index {
    width: 260px;
    padding: 25px 34px 0 29px;
    font-size: 40px;
    color: #2b3138;
}

.index div {
    display: flex;
    justify-content: space-between;
    align-items: center;
    height: 49px;
}

.index div:first-child { padding-right: 41px; }

.index b {
    color: #0aa545;
    font-weight: 500;
    letter-spacing: -1.6px;
}

.index span { font-size: 33px; }

.index .pct {
    font-size: 36px;
    letter-spacing: 0;
    margin-bottom: 2px;
}

.split {
    width: 2px;
    height: 46px;
    margin-top: 48px;
    background: #e3e3e3;
}

.item {
    width: 204.5px;
    padding-top: 23px;
    display: flex;
    flex-direction: column;
    align-items: center;
    font-size: 28.5px;
    color: #2b3138;
    line-height: 60px;
}

.item-first { width: 205px; }
.item:nth-of-type(3) { width: 203px; }

.item-trade {
    flex: 1;
    margin-top: -1px;
    padding-top: 20px;
    background: #ff283e;
    color: #fff;
}

.item-trade span { margin-top: -4px; }

.sys-nav {
    display: flex;
    gap: 222px;
    height: 132px;
    padding: 48px 0 0 255px;
    background: #f7f7f7;
}

.handle {
    position: absolute;
    left: -20px;
    top: 363px;
    width: 77px;
    height: 116px;
    padding: 27px 0 0 43px;
    border-radius: 16px;
    background: #fff;
    box-shadow: 0 0 18px rgba(0, 0, 0, 0.16);
}

.handle i {
    display: block;
    width: 11px;
    height: 11px;
    margin-bottom: 14.5px;
    border-radius: 50%;
    background: #999;
}

.marks {
    position: absolute;
    left: 0;
    top: 0;
    fill: none;
    stroke: #37b048;
    stroke-width: 8.6;
    stroke-linecap: round;
    stroke-linejoin: round;
}
```
FILE: script.js
```js
var NS = 'http://www.w3.org/2000/svg';

function rect(parent, x, y, w, h, fill)
{
    var r = document.createElementNS(NS, 'rect');
    r.setAttribute('x', x);
    r.setAttribute('y', y);
    r.setAttribute('width', w);
    r.setAttribute('height', h);
    r.setAttribute('fill', fill);
    parent.appendChild(r);
}

var RED = ['#740010', '#a80014', '#e2001e', '#ff283e'];
var BLUE = ['#005f7d', '#0092bb', '#00bdf5', '#30d2ff'];
var GOLD = ['#4e3c00', '#8a6b00', '#c49a08', '#ffc800'];
var CYAN = '#48c8ee';
var EDGE = '#fb283e';

// 圆柱形K线：由外到内四层颜色
function body(g, cx, top, bottom, colors, edge)
{
    var h = bottom - top;
    if (edge) rect(g, cx - 34, top, 68, h, edge);
    rect(g, cx - 30.5, top, 61, h, colors[0]);
    rect(g, cx - 23.5, top, 47, h, colors[1]);
    rect(g, cx - 16, top, 32, h, colors[2]);
    rect(g, cx - 8.5, top, 17, h, colors[3]);
}

var g = document.getElementById('candles');

rect(g, 14.5, 1366, 68, 3, EDGE);
rect(g, 18, 1366, 61, 3, '#057a94');
rect(g, 32, 1366, 33, 3, '#2b9cf0');
rect(g, 47, 1337, 3.5, 39, CYAN);

rect(g, 120, 1337, 4, 39, '#5fc0e6');
body(g, 122, 1351, 1369, BLUE, EDGE);

rect(g, 193.5, 1322, 4, 32, '#e2324a');
rect(g, 193.5, 1354, 3, 11, '#ffc800');
rect(g, 193.5, 1370, 3, 5, '#ffc800');
body(g, 195.3, 1328, 1354, RED, EDGE);
body(g, 195.3, 1344, 1354, GOLD);

// [中心x, 影线上, 影线下, 实体上, 实体下, 边色]
[
    [268.5, 1314, 1337, 1321, 1331, EDGE],
    [341.8, 1283, 1337, 1290, 1331, EDGE],
    [415, 1283, 1314, 1290, 1308, CYAN],
    [488.5, 1283, 1314, 1290, 1308, EDGE],
    [561.8, 1245, 1299, 1259.5, 1292.5, EDGE],
    [708.3, 839, 1062, 983.5, 1032, CYAN]
].forEach(function (c)
{
    rect(g, c[0] - 1.5, c[1], 3, c[2] - c[1], '#e2324a');
    body(g, c[0], c[3], c[4], RED, c[5]);
});

rect(g, 601, 1030, 68, 208.5, '#9509ff');
rect(g, 633.5, 1238, 3.5, 15, '#9509ff');

// 九转序号
[[195, 1302], [268.5, 1295], [341.8, 1265], [415, 1265], [488.5, 1265], [561.8, 1227], [635, 1011], [708, 820]].forEach(function (p, i)
{
    var t = document.createElementNS(NS, 'text');
    t.setAttribute('x', p[0]);
    t.setAttribute('y', p[1]);
    t.textContent = i + 1;
    document.getElementById('nine').appendChild(t);
});

// 红 / 紫资金柱
var v = document.getElementById('volume-bars');
[
    [48.5, 0, 0, 1368, 1413], [122, 0, 0, 1366, 1413], [195.3, 1352, 1366, 1366, 1412.5],
    [268.5, 1352, 1367, 1367, 1412], [341.8, 1345, 1366, 1366, 1411.5], [415, 1345, 1366, 1366, 1411],
    [488.5, 1340, 1364, 1364, 1410], [561.8, 1335, 1361, 1361, 1408.5], [635, 1300, 1347, 1361, 1406],
    [708.5, 1269.5, 1317, 1357.5, 1403.5]
].forEach(function (b)
{
    if (b[1]) rect(v, b[0] - 8.5, b[1], 17, b[2] - b[1], '#ff283e');
    rect(v, b[0] - 8.5, b[3], 17, b[4] - b[3], '#fc08fc');
});
rect(v, 40, 1352, 17, 16, '#00a83c');

// 筹码分布：每一价位的右端坐标
var chips = [];
var i;
for (i = 0; i < 24; i++) chips.push(792);
for (i = 0; i < 5; i++) chips.push(813);
for (i = 0; i < 4; i++) chips.push(772.5);
for (i = 0; i < 16; i++) chips.push(777);
chips = chips.concat([777.5, 784.6, 828, 835.7, 835.7, 842, 842, 893, 903, 899.6, 900.7, 929.6, 951, 989.6,
    1067.5, 1045.7, 1040.7, 1043, 1002, 987.5, 984.6, 923, 918, 906, 883.6, 847.5, 839.6, 825, 788.6, 773.6, 763.6, 762.5]);

var c = document.getElementById('chips');
chips.forEach(function (right, n)
{
    var color = n < 24 ? '#5580bb' : n === 53 ? '#d2d22e' : n < 59 || n > 73 ? '#ea0810' : '#fa0000';
    rect(c, 752, 841 + n * 7.93, right - 752, 5, color);
});
```
